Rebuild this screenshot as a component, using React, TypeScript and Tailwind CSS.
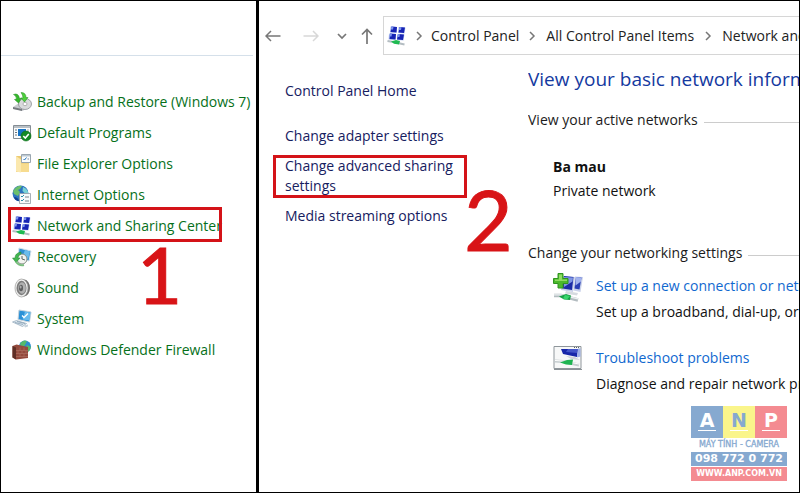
import React from "react";

function BackupIcon() {
  return (
    <svg viewBox="0 0 20 20" className="size-5 shrink-0" aria-hidden="true">
      <path d="M1 15l6-4 9 2-5 6-9-2z" fill="#c9ccd0" />
      <path d="M1 15l9 2v2l-9-2z" fill="#777b80" />
      <ellipse cx="13" cy="12" rx="6.5" ry="5.5" fill="#d9dadc" stroke="#8d9196" strokeWidth=".8" />
      <ellipse cx="13" cy="12" rx="2" ry="1.7" fill="#fff" stroke="#999" strokeWidth=".7" />
      <path d="M1.500 2.500q5-2 6 4l2-.5-3 5-4-3.500 2-.5q0-3-3-4.500z" fill="#35b82c" stroke="#1d8b1b" strokeWidth=".5" />
      <path d="M9 .5q5 0 5 5h2l-3.500 4.500-3.500-4h2q0-3-2-5.500z" fill="#4fd03c" stroke="#1d8b1b" strokeWidth=".5" />
    </svg>
  );
}

function ProgramsIcon() {
  return (
    <svg viewBox="0 0 20 20" className="size-5 shrink-0" aria-hidden="true">
      <path d="M1.500 2.500h17v13h-17z" fill="#fbfcfd" stroke="#858d94" />
      <path d="M2 3h16v2H2z" fill="#b8bfc5" />
      <path d="M6 6h8v7H6z" fill="#1573c4" />
      <path d="M3 7h2M3 9.500h2M3 12h2" stroke="#68727a" />
      <path d="M15 7h2M15 9h2" stroke="#a9b0b5" />
      <circle cx="14" cy="13" r="5" fill="#148a25" stroke="#0b6d1a" strokeWidth=".6" />
      <path d="M11.300 13l2 2 3.500-4" fill="none" stroke="#fff" strokeWidth="1.600" />
    </svg>
  );
}

function FolderIcon() {
  return (
    <svg viewBox="0 0 20 20" className="size-5 shrink-0" aria-hidden="true">
      <path d="M4 2h5l1 2h7v14H4z" fill="#ecca72" />
      <path d="M9.500.500h9v8h-9z" fill="#fafcfe" stroke="#9aa6b0" />
      <path d="M10 1h8v1.500h-8z" fill="#bcc8d1" />
      <path d="M11.500 5l1 1 2-2.500" fill="none" stroke="#2475bd" />
      <path d="M15.500 5h1.500" stroke="#7c8993" />
      <path d="M8 9.500h9V18H8z" fill="#f7dc90" />
      <path d="M4 2l5 3.500V18.500L4 17.500z" fill="#fbe8ae" />
    </svg>
  );
}

function InternetIcon() {
  return (
    <svg viewBox="0 0 20 20" className="size-5 shrink-0" aria-hidden="true">
      <circle cx="8.500" cy="8.500" r="8" fill="#2c74c0" />
      <path d="M1 6q4-6 9-5L8 4 6 5l2 2-2 4-4-2z" fill="#6cbf6a" />
      <path d="M11 2q5 2 5.500 7l-4-1-2-2z" fill="#7ad2d5" />
      <path d="M2 12q4 0 5 4-4 0-5-4z" fill="#133f8f" />
      <path d="M7.500 8.500h11v10h-11z" fill="#f8fafb" stroke="#929ca4" strokeWidth=".8" />
      <path d="M9 11l1 1 2-2M9 15l1 1 2-2" fill="none" stroke="#298ca8" />
      <path d="M13 12h4M13 16h4" stroke="#79868f" />
    </svg>
  );
}

function NetworkIcon() {
  return (
    <svg viewBox="0 0 20 20" className="size-5 shrink-0" aria-hidden="true">
      <path d="M3.500.500l6.500.5-.5 6-6.500-.5zM11.500 1l7 .5-1 6-6.500-.5zM2 7.500l7 .5-.5 6-7-.5zM10.500 8l7 .5-1 6-6.500-.5z" fill="#bccbf2" />
      <path d="M4.500.500l5.500.5-.5 5.500-6-.5zM12.500 1l5.500.5-1 5.500-5.500-.5zM3 7.500l6 .5-.5 5.500-6-.5zM11 8l6 .5-1 5.500-6-.5z" fill="#1724b4" />
      <path d="M4.500.500l2 .2-.5 2.800-2.300 0zM12.500 1l2 .2-.5 2.800-2.300 0zM3 7.500l2 .2-.5 2.800-2 0zM11 8l2 .2-.5 2.800-2.300 0z" fill="#7d95ee" />
      <path d="M.500 15l6 1 11 2.500" fill="none" stroke="#b4bdc2" strokeWidth="2" />
      <path d="M4 15.500l5-1.500 4 1-1 3.500-5-.8z" fill="#1fba52" />
    </svg>
  );
}

function RecoveryIcon() {
  return (
    <svg viewBox="0 0 20 20" className="size-5 shrink-0" aria-hidden="true">
      <path d="M7 1l12 3-2 10-11-3z" fill="#2f90d2" stroke="#d4e2ea" />
      <path d="M13 3l5 1.500-2 8-6-2z" fill="#6bbcec" />
      <circle cx="10" cy="12" r="5" fill="#f2f3f0" stroke="#818a82" />
      <path d="M10 12V9M10 12l3 1" stroke="#5b6660" />
      <path d="M9 5Q3 6 3 11H.5L4 15.500l4-4.500H6q0-3 3-4z" fill="#43b650" stroke="#248735" strokeWidth=".5" />
      <path d="M4 15q3 4 8 3" fill="none" stroke="#79bd7e" strokeWidth="2" />
    </svg>
  );
}

function SoundIcon() {
  return (
    <svg viewBox="0 0 20 20" className="size-5 shrink-0" aria-hidden="true">
      <ellipse cx="12" cy="10" rx="6" ry="8.500" fill="#6f6e6d" />
      <ellipse cx="9.500" cy="10" rx="6.500" ry="9" fill="#ededec" stroke="#9c9c9b" strokeWidth=".7" />
      <ellipse cx="9.500" cy="10" rx="5" ry="7.200" fill="#7c7c7c" />
      <ellipse cx="10" cy="10" rx="3.800" ry="5.800" fill="#b0b0b0" />
      <ellipse cx="9" cy="10" rx="2" ry="3.200" fill="#5c5d5e" />
      <ellipse cx="8.600" cy="9" rx="1" ry="1.500" fill="#aaa" />
    </svg>
  );
}

function SystemIcon() {
  return (
    <svg viewBox="0 0 20 20" className="size-5 shrink-0" aria-hidden="true">
      <path d="M7 1l12 2-1.500 10L6 10.500z" fill="#2b91d7" stroke="#c6d3dc" />
      <path d="M13 2.500l5.500 1-1 8-7-1z" fill="#68bbed" />
      <path d="M10 6.500l2 2 4-4" fill="none" stroke="#fff" strokeWidth="1.300" />
      <path d="M.500 13l4-1.500 10 3-4 3z" fill="#dde8f0" stroke="#8fa6b8" strokeWidth=".7" />
      <path d="M3 13.500l8 2M5 12.500l8 2" stroke="#7e98ad" strokeWidth=".7" />
      <path d="M12 16.500l4-1v2l-3 1z" fill="#c7d3dc" />
    </svg>
  );
}

function FirewallIcon() {
  return (
    <svg viewBox="0 0 20 20" className="size-5 shrink-0" aria-hidden="true">
      <circle cx="13" cy="6.500" r="6" fill="#2b8bce" />
      <path d="M8 4q3-5 7-3l-2 4-3 3zM15 5l4 2q-1 4-3 5l-3-3z" fill="#53ba69" />
      <path d="M.500 6l4-1.500L16 7v11l-12 1.500-3.500-2z" fill="#934a3d" />
      <path d="M.500 6L4 7.500v12l-3.500-2z" fill="#5f2f26" />
      <path d="M4 10.500h12M4 13.500h12M4 16.500h12M8 7.500v3M12 7.500v3M6 10.500v3M10 10.500v3M14 10.500v3M8 13.500v3M12 13.500v3" stroke="#b47d6f" strokeWidth=".5" />
    </svg>
  );
}

function ConnectionIcon() {
  return (
    <svg viewBox="0 0 30 30" className="size-[30px] shrink-0" aria-hidden="true">
      <path d="M10 3l12 1-2 15-12-2z" fill="#c9d1ea" />
      <path d="M11 3l9.500 1-1.500 13-9.500-1.500z" fill="#1c2ca6" />
      <path d="M11 4l9 .5-.5 4L11 14z" fill="#7f96e4" />
      <path d="M22 3.500l8 .5-2.500 15-7-1.500z" fill="#c9d1ea" />
      <path d="M23 4l5.500.5-2 12-5-1z" fill="#2b3fb4" />
      <path d="M23 4l5.500.5-.5 4-5.500 4z" fill="#a3b3ee" />
      <path d="M13 18l12 2-1 2.500-12-2z" fill="#d6dae0" />
      <path d="M1 22.500l7 0 17 4.500" fill="none" stroke="#b3bcc0" strokeWidth="3.500" />
      <path d="M1 21.800l7 0 17 4" fill="none" stroke="#edf1f2" strokeWidth="1.300" />
      <path d="M6 23.500l7-2.500 5 1.500-1 4.500-6-.5z" fill="#17a248" />
      <path d="M12 22l5 1-3 3.500-4-1z" fill="#37d66a" />
      <path d="M5 .500h5v5h5v5h-5v4.500H5v-4.500H.500v-5H5z" fill="#4cb92c" stroke="#2f9420" />
      <path d="M6 1.500h3v5h5v1.500H2V6.500h4z" fill="#8fdc63" />
    </svg>
  );
}

function TroubleshootIcon() {
  return (
    <svg viewBox="0 0 30 26" className="h-[26px] w-[30px] shrink-0" aria-hidden="true">
      <path d="M1 1.500h27v22H1z" fill="#f7f8f8" stroke="#8f969b" />
      <path d="M8 4l17 0-1 8-14-3z" fill="#1726a9" />
      <path d="M15 4h10l-1 4-11-1z" fill="#4254c8" />
      <path d="M25 3.500l2.500 0v8l-3.500 1z" fill="#9dafe8" />
      <path d="M13 11l9 1 5 3-9-1z" fill="#d0d4da" />
      <path d="M2 16l8 .5 16 3.500" fill="none" stroke="#c5cdcf" strokeWidth="3" />
      <path d="M2 15.500l8 .5 16 3" fill="none" stroke="#fff" />
      <path d="M7 17.500l7-2.500 6-.5-1 5.500-6-.5z" fill="#1eb451" />
      <path d="M21 2.500h6" stroke="#565e66" strokeDasharray="1 1" />
      <path d="M1 24.500h28" stroke="#8a9196" />
    </svg>
  );
}

function Chevron() {
  return (
    <svg viewBox="0 0 8 10" className="h-[10px] w-2 shrink-0" fill="none" aria-hidden="true">
      <path d="M2 1l4 4-4 4" stroke="#777" strokeWidth="1.500" />
    </svg>
  );
}

const items = [
  { label: "Backup and Restore (Windows 7)", Icon: BackupIcon },
  { label: "Default Programs", Icon: ProgramsIcon },
  { label: "File Explorer Options", Icon: FolderIcon },
  { label: "Internet Options", Icon: InternetIcon },
  { label: "Network and Sharing Center", Icon: NetworkIcon, marked: true },
  { label: "Recovery", Icon: RecoveryIcon },
  { label: "Sound", Icon: SoundIcon },
  { label: "System", Icon: SystemIcon },
  { label: "Windows Defender Firewall", Icon: FirewallIcon },
];

function ControlPanelList() {
  return (
    <section className="relative w-[255px] shrink-0 overflow-hidden pr-[3px]">
      <div className="h-[55px] border-b border-[#d5e0ea]" />
      <ul className="overflow-hidden pt-[30px] pl-[11px]">
        {items.map(({ label, Icon, marked }) => (
          <li key={label} className="relative">
            <a href="#" className="flex h-[31px] items-center gap-[5px] whitespace-nowrap text-[#06701a]">
              <Icon />
              {label}
            </a>
            {marked && (
              <span className="pointer-events-none absolute -top-[3px] -left-1 h-[35px] w-[214px] border-3 border-[#d41318]" />
            )}
          </li>
        ))}
      </ul>
      <span className="absolute top-[225px] left-[136px] font-[Lato] text-[78px] leading-[96px] text-[#d81417] [-webkit-text-stroke:1px_#d81417]">1</span>
    </section>
  );
}

function AddressBar() {
  return (
    <header className="flex h-[39px] items-center text-[#222]">
      <div className="flex w-[124px] shrink-0 items-center">
        <button aria-label="Back" className="ml-[6px]">
          <svg viewBox="0 0 16 14" className="h-[14px] w-4" fill="none" stroke="#777" strokeWidth="1.500">
            <path d="M15.500 7H1M6 2L1 7l5 5" />
          </svg>
        </button>
        <button aria-label="Forward" className="ml-[22px]">
          <svg viewBox="0 0 16 14" className="h-[14px] w-4" fill="none" stroke="#d8d8d8" strokeWidth="1.500">
            <path d="M.500 7H15M10 2l5 5-5 5" />
          </svg>
        </button>
        <button aria-label="Recent locations" className="ml-[18px]">
          <svg viewBox="0 0 10 8" className="h-2 w-[10px]" fill="none" stroke="#777" strokeWidth="1.700">
            <path d="M1 2l4 4 4-4" />
          </svg>
        </button>
        <button aria-label="Up" className="ml-[14px]">
          <svg viewBox="0 0 12 16" className="h-4 w-3" fill="none" stroke="#777" strokeWidth="1.700">
            <path d="M6 16V1.500M1 6.500l5-5 5 5" />
          </svg>
        </button>
      </div>
      <nav aria-label="Address" className="flex h-full min-w-0 grow items-center overflow-hidden border border-r-0 border-[#d6d6d6] pl-[3px] whitespace-nowrap">
        <NetworkIcon />
        <span className="ml-2"><Chevron /></span>
        <a href="#" className="ml-2 w-[89px]">Control Panel</a>
        <span className="ml-[9px]"><Chevron /></span>
        <a href="#" className="ml-[10px] w-[151px]">All Control Panel Items</a>
        <span className="ml-[10px]"><Chevron /></span>
        <a href="#" className="ml-[10px]">Network and Sharing Center</a>
      </nav>
    </header>
  );
}

function Sidebar() {
  return (
    <aside className="relative w-[269px] shrink-0 pt-[26px] pr-[62px] pl-[26px] leading-5 text-[#16205f]">
      <a href="#" className="block">Control Panel Home</a>
      <ul className="mt-[25px] flex flex-col gap-[10px]">
        <li><a href="#">Change adapter settings</a></li>
        <li className="relative">
          <a href="#" className="block">Change advanced sharing settings</a>
          <span className="pointer-events-none absolute -top-[1px] -left-3 h-[43px] w-[194px] border-3 border-[#d41318]" />
        </li>
        <li><a href="#" className="whitespace-nowrap">Media streaming options</a></li>
      </ul>
      <span className="absolute top-[112px] left-[205px] font-[Lato] text-[84px] leading-[104px] text-[#d81417] [-webkit-text-stroke:1px_#d81417]">2</span>
    </aside>
  );
}

function SectionTitle({ children }: { children: React.ReactNode }) {
  return (
    <h2 className="flex items-center gap-[6px] leading-5 whitespace-nowrap text-[#1b1b1b]">
      {children}
      <span className="mt-1 h-px grow bg-[#ccc]" />
    </h2>
  );
}

function Task({ icon, title, text }: { icon: React.ReactNode; title: string; text: string }) {
  return (
    <div className="flex gap-[13px] pl-[25px] whitespace-nowrap">
      {icon}
      <div>
        <a href="#" className="block leading-[26px] text-[#1068cf]">{title}</a>
        <p className="leading-[26px]">{text}</p>
      </div>
    </div>
  );
}

const logoLetters = [
  { letter: "A", tone: "bg-[#86a9d0] text-white" },
  { letter: "N", tone: "bg-[#faf58b] text-[#86a9d0]" },
  { letter: "P", tone: "bg-[#f48b91] text-white" },
];

function Watermark() {
  return (
    <div className="absolute right-3 bottom-[11px] w-[96px] text-center font-['DejaVu_Sans',sans-serif] font-bold text-white">
      <div className="grid grid-cols-3">
        {logoLetters.map(({ letter, tone }) => (
          <div key={letter} className={`h-8 px-[7px] ${tone}`}>
            <span className="block h-[25px] border-b border-white text-[19px] leading-[29px]">{letter}</span>
          </div>
        ))}
      </div>
      <p className="flex justify-center text-[8px] leading-[14px] font-normal whitespace-nowrap text-[#86a9d0] [-webkit-text-stroke:0.3px_#86a9d0]">MÁY TÍNH - CAMERA</p>
      <p className="flex justify-center bg-[#86a9d0] text-[11px] leading-[14px] whitespace-nowrap">098 772 0 772</p>
      <p className="mt-px flex justify-center bg-[#f48b91] text-[8px] leading-[14px] whitespace-nowrap">WWW.ANP.COM.VN</p>
    </div>
  );
}

export default function App() {
  return (
    <div className="relative flex h-screen overflow-hidden border border-black bg-white font-['Open_Sans','Noto_Sans',sans-serif] text-[14px] text-[#111]">
      <ControlPanelList />
      <div className="flex min-w-0 grow flex-col border-l-3 border-black pt-[15px]">
        <AddressBar />
        <div className="flex min-h-0 grow">
          <Sidebar />
          <main className="min-w-0 grow overflow-hidden pt-[10px]">
            <h1 className="text-[19px] leading-7 whitespace-nowrap text-[#1439a0]">
              View your basic network information and set up connections
            </h1>
            <div className="mt-[17px]"><SectionTitle>View your active networks</SectionTitle></div>
            <div className="mt-[25px] pl-[25px] leading-6">
              <p className="font-bold">Ba mau</p>
              <p>Private network</p>
            </div>
            <div className="mt-10"><SectionTitle>Change your networking settings</SectionTitle></div>
            <div className="mt-[10px] flex flex-col gap-5">
              <Task icon={<ConnectionIcon />} title="Set up a new connection or network" text="Set up a broadband, dial-up, or VPN connection" />
              <Task icon={<TroubleshootIcon />} title="Troubleshoot problems" text="Diagnose and repair network problems" />
            </div>
          </main>
        </div>
      </div>
      <Watermark />
    </div>
  );
}
